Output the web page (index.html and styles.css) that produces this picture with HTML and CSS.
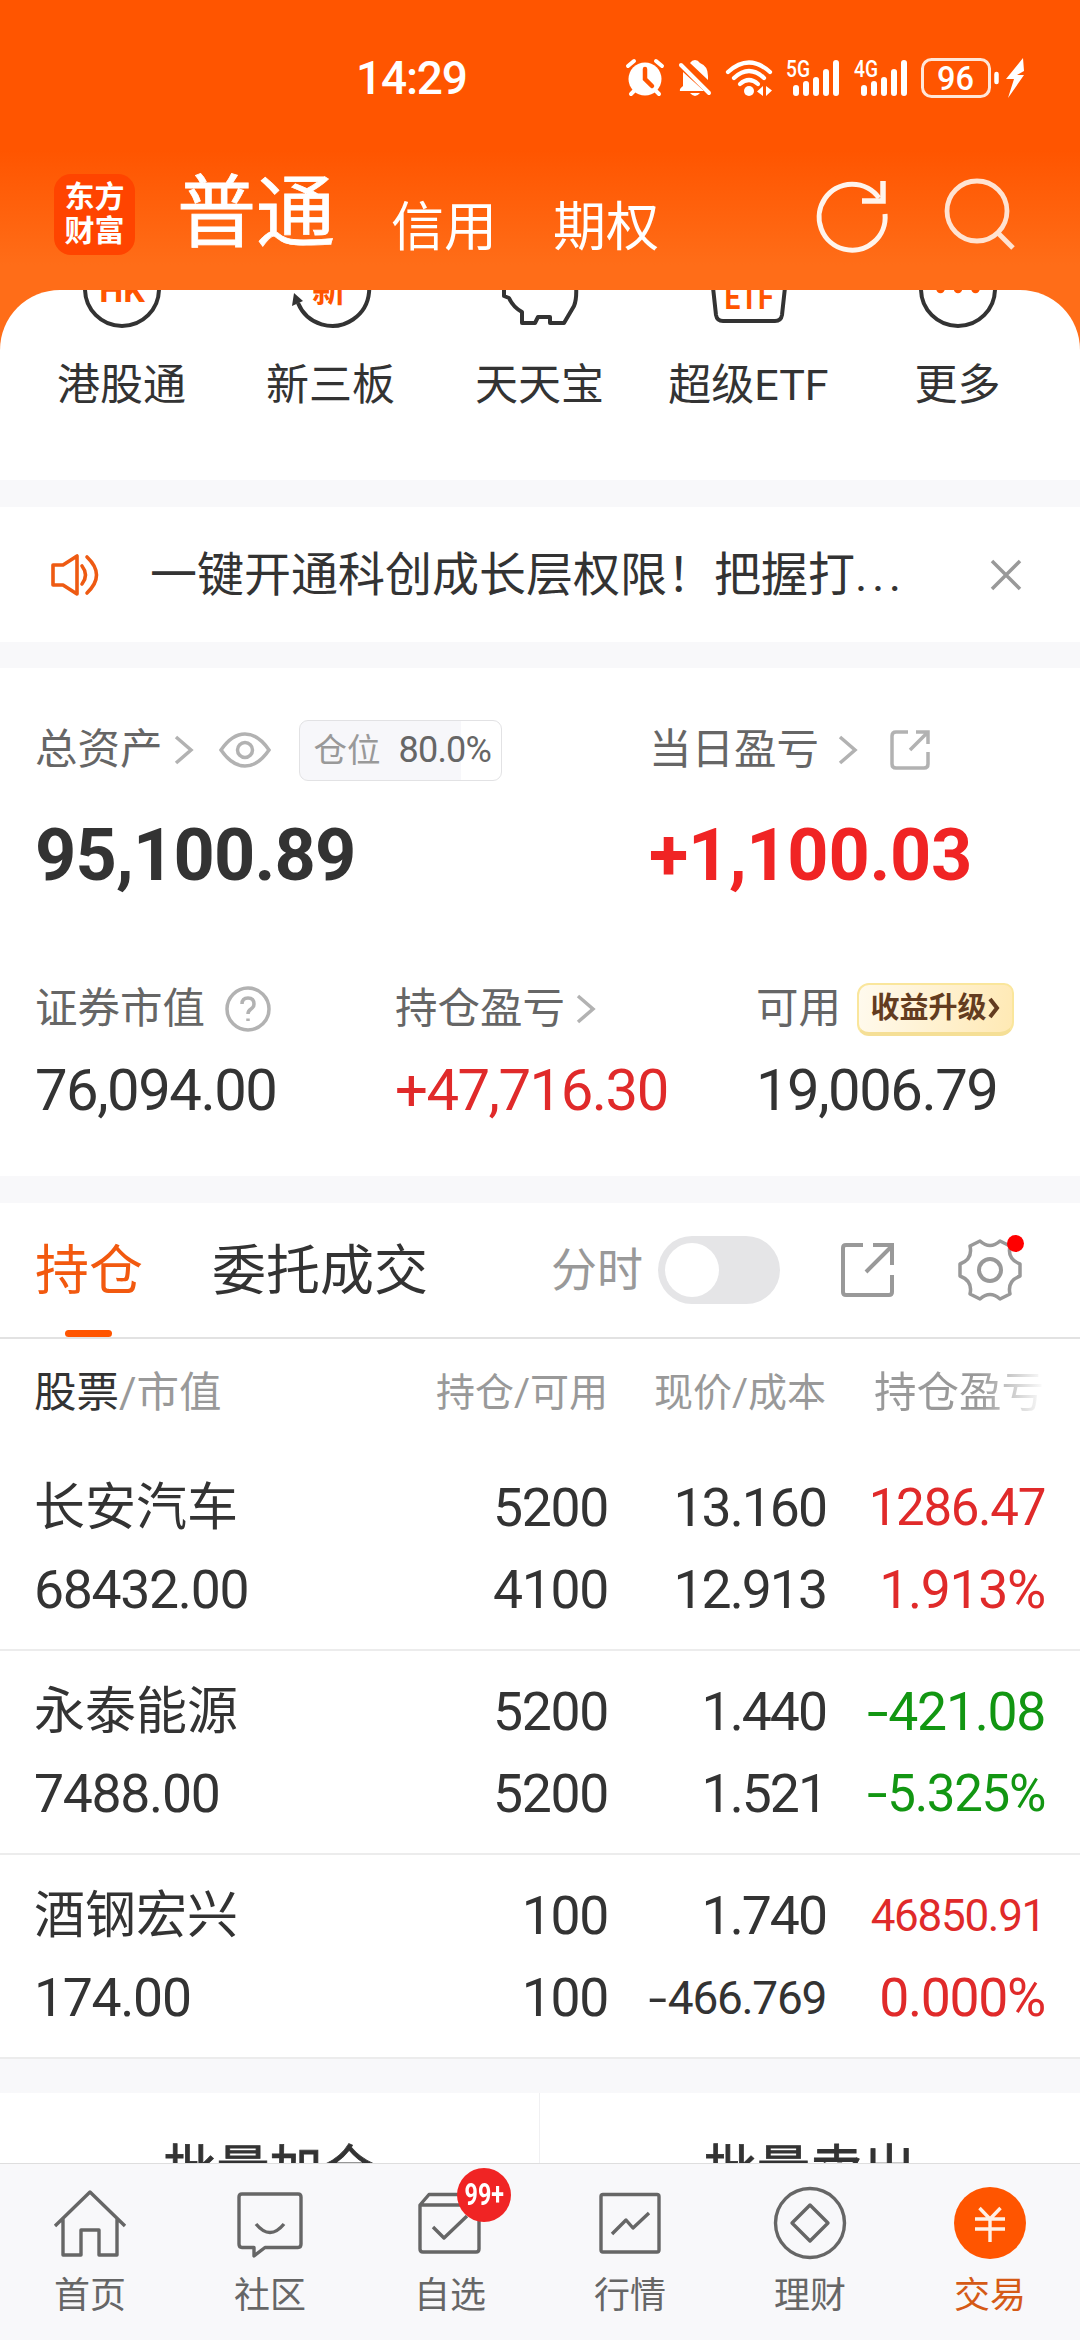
FILE: index.html
```html
<!DOCTYPE html>
<html lang="zh-CN">
<head>
    <meta charset="UTF-8">
    <meta name="viewport" content="width=device-width, initial-scale=1.0">
    <title>交易</title>
    <link rel="stylesheet" href="styles.css">
</head>
<body>
    <div class="app">
        <header class="header">
            <div class="status-bar">
                <span class="time">14:29</span>
                <div class="status-icons">
                    <svg class="alarm" width="40" height="40" viewBox="0 0 40 40">
                        <circle cx="20" cy="21" r="16.5" fill="#fff"/>
                        <path d="M3 8l6-5M31 3l6 5M9 33l-3 3M31 33l3 3" stroke="#fff" stroke-width="4" stroke-linecap="round"/>
                        <path d="M20 11v10l7 7" fill="none" stroke="#ff5500" stroke-width="4.5" stroke-linecap="round"/>
                    </svg>
                    <svg class="bell" width="34" height="40" viewBox="0 0 34 40">
                        <path d="M12 5Q14 2 17 2T22 5Q30 8 30 18V22z" fill="#fff"/>
                        <path d="M5 14L26 33H2Q1 31 5 28z" fill="#fff"/>
                        <path d="M3 7l28 28" stroke="#fff" stroke-width="4" stroke-linecap="round"/>
                        <path d="M12 35h10q-5 6-10 0" fill="#fff"/>
                    </svg>
                    <svg class="wifi" width="48" height="40" viewBox="0 0 48 40">
                        <g fill="none" stroke="#fff" stroke-width="4.2" stroke-linecap="round">
                            <path d="M3 14Q24-5 45 14"/>
                            <path d="M9 20Q24 6 39 20"/>
                            <path d="M15 26Q24 18 33 26"/>
                        </g>
                        <circle cx="24" cy="33" r="5" fill="#fff"/>
                        <path d="M38 28v10l-6-4.500zM41 28v10l6-5.500z" fill="#fff"/>
                    </svg>
                    <svg class="signal" width="56" height="40" viewBox="0 0 56 40">
                        <text x="1" y="19" class="net-label" textLength="24" lengthAdjust="spacingAndGlyphs">5G</text>
                        <path d="M11 30v5M21 26v9M31 22v13M41 14v21M51 5v30" stroke="#fff" stroke-width="6" stroke-linecap="round"/>
                    </svg>
                    <svg class="signal" width="56" height="40" viewBox="0 0 56 40">
                        <text x="1" y="19" class="net-label" textLength="24" lengthAdjust="spacingAndGlyphs">4G</text>
                        <path d="M11 30v5M21 26v9M31 22v13M41 14v21M51 5v30" stroke="#fff" stroke-width="6" stroke-linecap="round"/>
                    </svg>
                    <svg class="battery" width="106" height="40" viewBox="0 0 106 40">
                        <rect x="1.500" y="1.500" width="67" height="37" rx="9" fill="none" stroke="#ffe6d8" stroke-width="3"/>
                        <text x="16" y="32" class="battery-label" textLength="37" lengthAdjust="spacingAndGlyphs">96</text>
                        <path d="M75.500 16v8" stroke="#fff" stroke-width="4.500" stroke-linecap="round"/>
                        <path d="M102 0L85 21H93L87 40L103 17H96L103 13z" fill="#fff"/>
                    </svg>
                </div>
            </div>
            <div class="title-bar">
                <div class="logo"><span>东方</span><span>财富</span></div>
                <h1>普通</h1>
                <span class="account">信用</span>
                <span class="account">期权</span>
                <svg class="refresh" width="74" height="74" viewBox="0 0 74 74">
                    <path d="M64 21A33 33 0 1 0 70 37" fill="none" stroke="#fff4ec" stroke-width="5"/>
                    <path d="M68 4V24H47" fill="none" stroke="#fff4ec" stroke-width="5.500"/>
                </svg>
                <svg class="search" width="74" height="74" viewBox="0 0 74 74">
                    <circle cx="34" cy="34" r="30" fill="none" stroke="#ffe3d2" stroke-width="4.800"/>
                    <path d="M54 55L70 71" stroke="#ffe3d2" stroke-width="5"/>
                </svg>
            </div>
        </header>

        <div class="shortcuts-wrap">
            <nav class="shortcuts">
                <a class="shortcut">
                    <svg width="80" height="80" viewBox="0 0 80 80">
                        <circle cx="40" cy="40" r="37" class="dark-line"/>
                        <text x="40" y="53" class="icon-text" font-size="34">HK</text>
                    </svg>
                    <span>港股通</span>
                </a>
                <a class="shortcut">
                    <svg width="80" height="80" viewBox="0 0 80 80">
                        <path d="M7 54A37 37 0 1 0 10 20" class="dark-line"/>
                        <path d="M3 44L12 52L1 57z" fill="#333"/>
                        <text x="38" y="53" class="icon-text" font-size="34">新</text>
                    </svg>
                    <span>新三板</span>
                </a>
                <a class="shortcut">
                    <svg width="80" height="80" viewBox="0 0 80 80">
                        <path d="M4 30V47L9 49Q13 58 22 63V74H35L38 68H50V74H64L74 57Q77 50 76 36Q70 12 40 12Q16 12 12 28z" class="dark-line"/>
                    </svg>
                    <span>天天宝</span>
                </a>
                <a class="shortcut">
                    <svg width="80" height="80" viewBox="0 0 80 80">
                        <path d="M2 20L7 66Q8 72 14 72H66Q72 72 73 66L78 20z" class="dark-line"/>
                        <text x="40" y="60" class="icon-text" font-size="34" textLength="49" lengthAdjust="spacingAndGlyphs">ETF</text>
                    </svg>
                    <span>超级ETF</span>
                </a>
                <a class="shortcut">
                    <svg width="80" height="80" viewBox="0 0 80 80">
                        <circle cx="40" cy="40" r="37" class="dark-line"/>
                        <path d="M22.500 40h0M40 40h0M57.500 40h0" stroke="#ff5500" stroke-width="8.500" stroke-linecap="round"/>
                    </svg>
                    <span>更多</span>
                </a>
            </nav>
        </div>

        <section class="notice">
            <svg width="50" height="42" viewBox="0 0 50 42">
                <g fill="none" stroke="#ee5a12" stroke-width="3.600" stroke-linejoin="round" stroke-linecap="round">
                    <path d="M3 11H13L27 2V40L13 31H3z"/>
                    <path d="M32 12Q39 21 32 30"/>
                    <path d="M37 3Q56 21 37 39"/>
                </g>
            </svg>
            <p>一键开通科创成长层权限！把握打<span class="ellipsis">...</span></p>
            <svg width="32" height="32" viewBox="0 0 32 32">
                <path d="M2 2L30 30M30 2L2 30" stroke="#999" stroke-width="3.500"/>
            </svg>
        </section>

        <section class="assets">
            <div class="total-row">
                <div>
                    <div class="label tall">
                        总资产
                        <svg class="chevron" width="20" height="30" viewBox="0 0 20 30"><path d="M2 2L17 15L2 28"/></svg>
                        <svg class="eye" width="52" height="36" viewBox="0 0 52 36">
                            <path d="M2 18Q13 2 26 2T50 18Q39 34 26 34T2 18z"/>
                            <circle cx="26" cy="18" r="7.500"/>
                        </svg>
                        <span class="ratio"><em>仓位</em>80.0%</span>
                    </div>
                    <div class="total">95,100.89</div>
                </div>
                <div>
                    <div class="label tall today">
                        当日盈亏
                        <svg class="chevron" width="20" height="30" viewBox="0 0 20 30"><path d="M2 2L17 15L2 28"/></svg>
                        <svg class="share" width="40" height="40" viewBox="0 0 40 40">
                            <path d="M18 2H6Q2 2 2 6V34Q2 38 6 38H34Q38 38 38 34V22M26 2H38V14M38 2L20 20"/>
                        </svg>
                    </div>
                    <div class="total up">+1,100.03</div>
                </div>
            </div>
            <div class="detail-row">
                <div>
                    <div class="label">
                        证券市值
                        <svg class="help" width="46" height="46" viewBox="0 0 46 46">
                            <circle cx="23" cy="23" r="21"/>
                            <path d="M17 18Q17 12 23 12T29 18Q29 21 26 23T23 28M23 32.500v2.500"/>
                        </svg>
                    </div>
                    <div class="value">76,094.00</div>
                </div>
                <div>
                    <div class="label">
                        持仓盈亏
                        <svg class="chevron" width="20" height="30" viewBox="0 0 20 30"><path d="M2 2L17 15L2 28"/></svg>
                    </div>
                    <div class="value up">+47,716.30</div>
                </div>
                <div>
                    <div class="label">
                        可用
                        <span class="upgrade">收益升级<svg width="14" height="22" viewBox="0 0 14 22"><path d="M3 2L10 11L3 20" fill="none"/></svg></span>
                    </div>
                    <div class="value">19,006.79</div>
                </div>
            </div>
        </section>

        <section class="holdings">
            <div class="tabs">
                <span class="tab active">持仓</span>
                <span class="tab">委托成交</span>
                <span class="switch-label">分时</span>
                <span class="switch"></span>
                <svg class="export" width="56" height="56" viewBox="0 0 56 56">
                    <path d="M23 3H6Q3 3 3 6V50Q3 53 6 53H49Q52 53 52 50V33M33 3H52V23M52 4L26 30"/>
                </svg>
                <span class="settings">
                    <svg width="64" height="64" viewBox="-32 -32 64 64">
                        <path d="M-10-29Q0-20 10-29L20-24Q17-11 30-6V6Q17 11 20 24L10 29Q0 20-10 29L-20 24Q-17 11-30 6V-6Q-17-11-20-24z"/>
                        <circle r="11" stroke-width="4"/>
                    </svg>
                    <i class="dot"></i>
                </span>
            </div>
            <div class="row head">
                <span class="stock"><b>股票</b>/市值</span>
                <span>持仓/可用</span>
                <span>现价/成本</span>
                <span class="fade">持仓盈亏</span>
            </div>
            <div class="row">
                <span class="name">长安汽车</span><span>5200</span><span class="price">13.160</span><span class="up s50">1286.47</span>
                <span>68432.00</span><span>4100</span><span class="price">12.913</span><span class="up">1.913%</span>
            </div>
            <div class="row">
                <span class="name">永泰能源</span><span>5200</span><span class="price">1.440</span><span class="down"><i class="minus">-</i>421.08</span>
                <span>7488.00</span><span>5200</span><span class="price">1.521</span><span class="down s50"><i class="minus">-</i>5.325%</span>
            </div>
            <div class="row">
                <span class="name">酒钢宏兴</span><span>100</span><span class="price">1.740</span><span class="up s44">46850.91</span>
                <span>174.00</span><span>100</span><span class="s46"><i class="minus">-</i>466.769</span><span class="up">0.000%</span>
            </div>
        </section>

        <section class="actions">
            <span>批量加仓</span>
            <span>批量卖出</span>
        </section>

        <nav class="tab-bar">
            <a>
                <svg width="80" height="80" viewBox="0 0 80 80"><path d="M5 43L40 9L75 43M13 36V72H31V47H49V72H67V36"/></svg>
                首页
            </a>
            <a>
                <svg width="80" height="80" viewBox="0 0 80 80"><path d="M12 11H68Q71 11 71 14V61Q71 64.500 68 64.500H35L24 73V64.500H12Q9 64.500 9 61V14Q9 11 12 11zM26 41Q40 58 54 41"/></svg>
                社区
            </a>
            <a>
                <svg width="80" height="80" viewBox="0 0 80 80"><path d="M10 22L19 11.500H69V66Q69 69 66 69H13Q10 69 10 66zM10 22H69M23 44L34 55L57 33"/></svg>
                自选
                <i class="badge"><b>99+</b></i>
            </a>
            <a>
                <svg width="80" height="80" viewBox="0 0 80 80"><rect x="11" y="11.500" width="58" height="57.500" rx="2"/><path d="M22 51L36 37L43 45L59 30"/></svg>
                行情
            </a>
            <a>
                <svg width="80" height="80" viewBox="0 0 80 80"><circle cx="40" cy="40" r="34.500"/><path d="M40 22L58 40L40 58L22 40z"/></svg>
                理财
            </a>
            <a class="current">
                <svg width="80" height="80" viewBox="0 0 80 80"><circle cx="40" cy="40" r="36"/><path d="M29.500 25L40 36L50.500 25M25 36H55M25 46H55M40 36V59"/></svg>
                交易
            </a>
        </nav>
    </div>
</body>
</html>
```
FILE: styles.css
```css
* {
    margin: 0;
    padding: 0;
    box-sizing: border-box;
}

body {
    font-family: Roboto, 'Noto Sans CJK SC', sans-serif;
    background: #f8f8fa;
    color: #333;
}

svg {
    display: block;
    flex-shrink: 0;
    overflow: visible;
}

em,
i {
    font-style: normal;
}

.app {
    width: 1080px;
    height: 2340px;
    overflow: hidden;
    display: flex;
    flex-direction: column;
}

.up {
    color: #e02a2a;
}

.down {
    color: #129612;
}

/* header */
.header {
    height: 290px;
    background: linear-gradient(#ff5500 0, #ff5500 150px, #ff6d18 265px);
    color: #fff;
}

.status-bar {
    height: 156px;
    padding: 0 53px 0 356px;
    display: flex;
    align-items: center;
    justify-content: space-between;
}

.time {
    font-size: 46px;
    font-weight: 500;
    letter-spacing: -1.2px;
}

.status-icons {
    display: flex;
    align-items: center;
}

.bell {
    margin-left: 13px;
}

.wifi {
    margin-left: 13px;
}

.signal {
    margin-left: 12px;
}

.battery {
    margin-left: 12px;
}

.net-label {
    font-size: 23px;
    font-weight: 500;
    fill: #fff;
}

.battery-label {
    font-size: 34px;
    font-weight: 500;
    fill: #fff;
}

.title-bar {
    height: 116px;
    padding: 0 63px 0 54px;
    display: flex;
    align-items: center;
}

.logo {
    width: 81px;
    height: 81px;
    border-radius: 17px;
    background: #ff4400;
    font-size: 30px;
    font-weight: 700;
    line-height: 34px;
    display: flex;
    flex-direction: column;
    align-items: center;
    justify-content: center;
}

h1 {
    margin-left: 42px;
    font-size: 79px;
    font-weight: 400;
    line-height: 116px;
    -webkit-text-stroke: 0.8px #fff;
}

.account {
    margin-left: 56px;
    padding-top: 28px;
    font-size: 53px;
    line-height: 80px;
}

.refresh {
    margin-left: auto;
}

.search {
    margin-left: 54px;
}

/* shortcuts */
.shortcuts-wrap {
    background: #ff6d18;
}

.shortcuts {
    height: 190px;
    padding: 0 17px;
    border-radius: 60px 60px 0 0;
    background: #fff;
    overflow: hidden;
    display: grid;
    grid-template-columns: repeat(5, 209px);
}

.shortcut {
    margin-top: -41px;
    display: flex;
    flex-direction: column;
    align-items: center;
    font-size: 43px;
    line-height: 60px;
    gap: 26px;
}

.dark-line {
    fill: none;
    stroke: #333;
    stroke-width: 4;
    stroke-linejoin: round;
}

.icon-text {
    fill: #ff5500;
    font-weight: 700;
    text-anchor: middle;
}

/* notice */
.notice {
    height: 135px;
    margin: 27px 0 26px;
    padding: 0 58px 0 50px;
    background: #fff;
    display: flex;
    align-items: center;
}

.notice p {
    flex: 1;
    margin-left: 50px;
    font-size: 47px;
    line-height: 60px;
}

.ellipsis {
    letter-spacing: 4.5px;
}

/* assets */
.assets {
    height: 508px;
    padding: 51px 36px 0 35px;
    background: #fff;
}

.assets svg {
    fill: none;
    stroke: #b2b2b2;
    stroke-width: 3.5;
}

.total-row {
    display: grid;
    grid-template-columns: 614px 1fr;
}

.detail-row {
    margin-top: 86px;
    display: grid;
    grid-template-columns: 360px 361px 1fr;
}

.label {
    height: 54px;
    display: flex;
    align-items: center;
    font-size: 42.5px;
    line-height: 54px;
    color: #666;
    white-space: nowrap;
}

.label.tall {
    height: 62px;
}

.chevron {
    margin-left: 11px;
}

.today .chevron {
    margin-left: 19px;
}

.eye {
    margin-left: 25px;
}

.share {
    margin-left: 32px;
}

.help {
    margin-left: 20px;
}

.ratio {
    margin-left: 28px;
    width: 203px;
    height: 61px;
    padding-left: 14px;
    border: 1px solid #e2e2e4;
    border-radius: 9px;
    background: linear-gradient(90deg, #f7f7fa 80%, #fff 80%);
    font-size: 36px;
    line-height: 58px;
    letter-spacing: -0.8px;
}

.ratio em {
    margin-right: 18px;
    font-size: 33.5px;
    letter-spacing: 0;
    color: #999;
}

.total {
    margin-top: 35px;
    font-size: 72px;
    font-weight: 700;
    line-height: 80px;
    letter-spacing: -0.8px;
}

.total.up {
    color: #f02424;
    letter-spacing: -0.3px;
}

.value {
    margin-top: 19px;
    font-size: 58px;
    line-height: 70px;
    letter-spacing: -1.5px;
}

.upgrade {
    margin-left: 16px;
    width: 157px;
    height: 53px;
    border: 2px solid #fae69c;
    border-bottom: 4px solid #f5df96;
    border-radius: 12px 10px 14px 12px;
    background: linear-gradient(100deg, #fffaee, #ffe9b4);
    color: #633c20;
    font-size: 29px;
    font-weight: 700;
    line-height: 46px;
    display: flex;
    align-items: center;
    justify-content: center;
}

.upgrade svg {
    stroke: #633c20;
    stroke-width: 4;
}

/* holdings */
.holdings {
    margin-top: 27px;
    background: #fff;
}

.tabs {
    height: 136px;
    padding-left: 35px;
    border-bottom: 2px solid #e2e2e2;
    display: flex;
    align-items: center;
}

.tab {
    position: relative;
    height: 134px;
    margin-right: 69px;
    font-size: 54px;
    line-height: 138px;
}

.tab.active {
    color: #f2590f;
}

.tab.active::after {
    content: '';
    position: absolute;
    left: 30px;
    bottom: 0;
    width: 47px;
    height: 7px;
    border-radius: 4px;
    background: #ff5500;
}

.switch-label {
    margin-left: 54px;
    font-size: 46px;
    line-height: 60px;
    color: #999;
}

.switch {
    margin-left: 15px;
    width: 122px;
    height: 68px;
    padding: 7px;
    border-radius: 34px;
    background: #e5e5e7;
}

.switch::before {
    content: '';
    display: block;
    width: 54px;
    height: 54px;
    border-radius: 50%;
    background: #fff;
}

.export {
    margin-left: 60px;
    fill: none;
    stroke: #999;
    stroke-width: 4;
}

.settings {
    position: relative;
    margin-left: 62px;
}

.settings svg {
    fill: none;
    stroke: #999;
    stroke-width: 3.5;
    stroke-linejoin: round;
}

.dot {
    position: absolute;
    top: -3px;
    right: -2px;
    width: 17px;
    height: 17px;
    border-radius: 50%;
    background: #ff0000;
}

.row {
    height: 204px;
    padding: 20px 35px 0 34px;
    border-bottom: 2px solid #ececec;
    display: grid;
    grid-template-columns: 274px 300px 218px 219px;
    grid-auto-rows: 82px;
    align-items: center;
    font-size: 53.5px;
    line-height: 82px;
    letter-spacing: -1.3px;
    text-align: right;
    white-space: nowrap;
}

.row span:nth-child(4n + 1) {
    text-align: left;
}

.name {
    font-size: 51px;
    letter-spacing: 0;
}

.price {
    letter-spacing: -2px;
}

.minus {
    display: inline-block;
    margin-right: 5px;
    transform: scaleX(1.45);
}

.s50 {
    font-size: 51px;
}

.s46 {
    font-size: 46px;
}

.s44 {
    font-size: 44px;
}

.head {
    height: 108px;
    padding-top: 0;
    border: 0;
    grid-auto-rows: 108px;
    font-size: 39px;
    line-height: 108px;
    letter-spacing: 0;
    color: #999;
}

.head .stock {
    font-size: 42.5px;
}

.head b {
    font-weight: 400;
    color: #333;
}

.head .fade {
    padding-left: 48px;
    text-align: left;
    font-size: 42.5px;
    background: linear-gradient(90deg, #999 70%, #fff 100%);
    -webkit-background-clip: text;
    background-clip: text;
    color: transparent;
}

/* actions */
.actions {
    height: 70px;
    margin-top: 34px;
    background: #fff;
    overflow: hidden;
    display: grid;
    grid-template-columns: 1fr 1fr;
    text-align: center;
    font-size: 53px;
    line-height: 157px;
    -webkit-text-stroke: 0.8px #333;
}

.actions span:first-child {
    border-right: 1px solid #f0f0f2;
}

/* bottom tab bar */
.tab-bar {
    height: 177px;
    padding-top: 19px;
    border-top: 1px solid #dedede;
    background: #f8f8fa;
    display: grid;
    grid-template-columns: repeat(6, 180px);
}

.tab-bar a {
    position: relative;
    display: flex;
    flex-direction: column;
    align-items: center;
    gap: 9px;
    font-size: 36px;
    line-height: 48px;
    color: #666;
}

.tab-bar svg {
    fill: none;
    stroke: #666;
    stroke-width: 3.4;
    stroke-linejoin: round;
}

.tab-bar .current {
    color: #d55a16;
}

.current circle {
    fill: #ff5500;
    stroke: none;
}

.current path {
    stroke: #fff0e6;
}

.badge {
    position: absolute;
    left: 97px;
    top: -15px;
    width: 54px;
    height: 54px;
    border-radius: 50%;
    background: #f02424;
    color: #fff;
    font-size: 31px;
    line-height: 54px;
    display: flex;
    justify-content: center;
}

.badge b {
    font-weight: 700;
    transform: scaleX(0.75);
}
```
